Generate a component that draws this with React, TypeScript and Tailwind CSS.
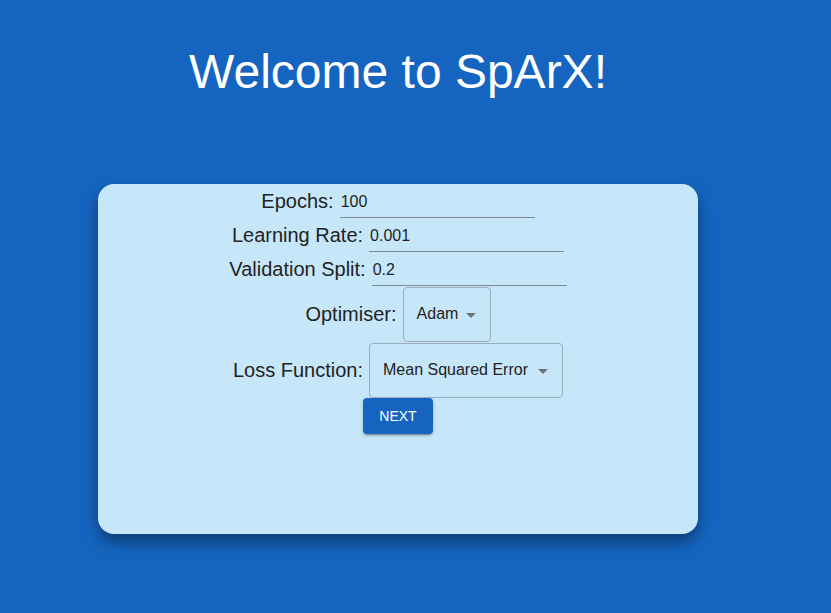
import { useState } from 'react'

const font = { fontFamily: '"Liberation Sans", Arial, sans-serif' }

function TextRow({ label, value, width }: { label: string; value: string; width: number }) {
    const [v, setV] = useState(value)
    return (
        <div className="flex h-[34px] items-center justify-center gap-[6px]">
            <span className="text-[20px] leading-[23px] text-[#222]">{label}</span>
            <div className="h-[33px] border-b border-[#7b8a94]" style={{ width }}>
                <input
                    value={v}
                    onChange={(e) => setV(e.target.value)}
                    className="h-[32px] w-full bg-transparent pl-[1px] pt-[3px] text-[16px] text-[#1f1f1f] outline-none"
                />
            </div>
        </div>
    )
}

function SelectRow({ label, value, width }: { label: string; value: string; width: number }) {
    return (
        <div className="flex h-[56px] items-center justify-center gap-[6px]">
            <span className="text-[20px] leading-[23px] text-[#222]">{label}</span>
            <div
                className="relative flex h-[55px] items-center rounded-[4px] border border-[#98aebb] pl-[13px] text-[16px] text-[#222]"
                style={{ width }}
            >
                {value}
                <svg viewBox="0 0 24 24" className="absolute right-[7px] top-[15px] h-[24px] w-[24px] fill-[#6f7479]">
                    <path d="M7 10l5 5 5-5z" />
                </svg>
            </div>
        </div>
    )
}

export default function App() {
    return (
        <div className="min-h-[613px] w-full bg-[#1565c0]" style={font}>
            <div className="w-[796px]">
                <h1 className="pt-[44px] text-center text-[48px] leading-[55px] text-white">Welcome to SpArX!</h1>
                <div className="mx-auto mt-[85px] h-[350px] w-[600px] rounded-[16px] bg-[#c6e7fa] shadow-[0_8px_16px_rgba(0,0,0,0.4)]">
                    <TextRow label="Epochs:" value="100" width={195} />
                    <TextRow label="Learning Rate:" value="0.001" width={195} />
                    <TextRow label="Validation Split:" value="0.2" width={195} />
                    <SelectRow label="Optimiser:" value="Adam" width={88} />
                    <SelectRow label="Loss Function:" value="Mean Squared Error" width={194} />
                    <div className="flex justify-center">
                        <button className="h-[36px] rounded-[4px] bg-[#1565c0] px-[16px] text-[14px] font-medium uppercase text-white shadow-[0_3px_1px_-2px_rgba(0,0,0,0.2),0_2px_2px_0_rgba(0,0,0,0.14),0_1px_5px_0_rgba(0,0,0,0.12)]">
                            Next
                        </button>
                    </div>
                </div>
            </div>
        </div>
    )
}
